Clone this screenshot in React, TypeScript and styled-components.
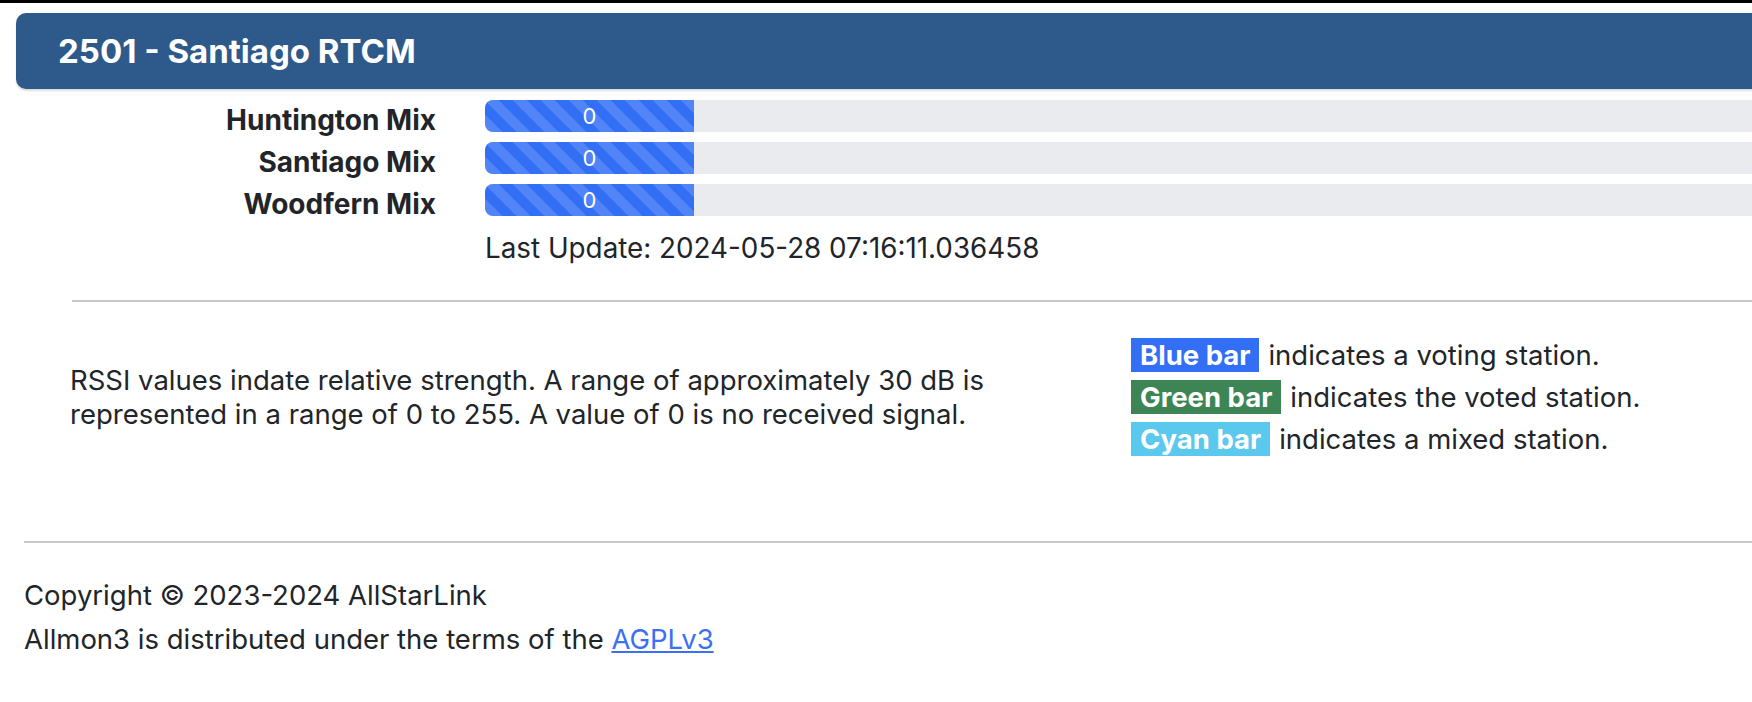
import styled, { createGlobalStyle } from 'styled-components';

const mixes = ['Huntington Mix', 'Santiago Mix', 'Woodfern Mix'];

const legend = [
  { label: 'Blue bar', color: '#336ff5', text: 'indicates a voting station.' },
  { label: 'Green bar', color: '#3e8556', text: 'indicates the voted station.' },
  { label: 'Cyan bar', color: '#5bc8ee', text: 'indicates a mixed station.' },
];

export default function App() {
  return (
    <>
      <GlobalStyle />
      <TopEdge />
      <Page>
        <Header>
          <Title>2501 - Santiago RTCM</Title>
        </Header>

        <MeterGrid>
          {mixes.map((name) => (
            <MeterRow key={name}>
              <MeterLabel>{name}</MeterLabel>
              <Track>
                <Fill style={{ width: 209 }}>0</Fill>
              </Track>
            </MeterRow>
          ))}
          <LastUpdate>Last Update: 2024-05-28 07:16:11.036458</LastUpdate>
        </MeterGrid>

        <Rule $left={72} $top={35} />

        <Info>
          <InfoText>
            RSSI values indate relative strength. A range of approximately 30 dB is
            represented in a range of 0 to 255. A value of 0 is no received signal.
          </InfoText>
          <Legend>
            {legend.map((item) => (
              <LegendRow key={item.label}>
                <Badge $color={item.color}>{item.label}</Badge>
                {item.text}
              </LegendRow>
            ))}
          </Legend>
        </Info>

        <Rule $left={24} $top={0} />

        <Footer>
          <FooterLine>Copyright © 2023-2024 AllStarLink</FooterLine>
          <FooterLine>
            Allmon3 is distributed under the terms of the{' '}
            <FooterLink href="#">AGPLv3</FooterLink>
          </FooterLine>
        </Footer>
      </Page>
    </>
  );
}

const GlobalStyle = createGlobalStyle`
  html, body {
    margin: 0;
    padding: 0;
    background: #fff;
    overflow: hidden;
  }
  body {
    font-family: Inter, "Noto Sans", sans-serif;
    color: #212529;
    font-size: 27.5px;
  }
`;

const TopEdge = styled.div`
  height: 3px;
  background: #000;
`;

const Page = styled.div`
  width: 1800px;
  padding-top: 10px;
`;

const Header = styled.div`
  margin-left: 16px;
  height: 76px;
  display: flex;
  align-items: center;
  padding-left: 42px;
  background: #2d5a8b;
  border-radius: 10px 0 0 10px;
  box-shadow: 0 2px 2px rgba(0, 0, 0, 0.14);
`;

const Title = styled.h2`
  margin: 0;
  color: #fff;
  font-size: 33px;
  font-weight: 700;
`;

const MeterGrid = styled.div`
  margin-top: 11px;
  display: flex;
  flex-direction: column;
  gap: 10px;
`;

const MeterRow = styled.div`
  height: 32px;
  display: grid;
  grid-template-columns: 436px 1fr;
  column-gap: 49px;
  align-items: start;
`;

const MeterLabel = styled.div`
  text-align: right;
  font-size: 28px;
  font-weight: 700;
  line-height: 41px;
  height: 32px;
`;

const Track = styled.div`
  height: 32px;
  background: #e9ebef;
  border-radius: 8px 0 0 8px;
  overflow: hidden;
  display: flex;
`;

const Fill = styled.div`
  height: 100%;
  display: flex;
  align-items: center;
  justify-content: center;
  color: #fff;
  font-size: 22px;
  background-color: #336ff5;
  background-image: linear-gradient(
    45deg,
    rgba(255, 255, 255, 0.15) 25%,
    transparent 25%,
    transparent 50%,
    rgba(255, 255, 255, 0.15) 50%,
    rgba(255, 255, 255, 0.15) 75%,
    transparent 75%,
    transparent
  );
  background-size: 28px 28px;
`;

const LastUpdate = styled.div`
  margin: 5px 0 0 485px;
  font-size: 27.8px;
  line-height: 34px;
`;

const Rule = styled.hr<{ $left: number; $top: number }>`
  margin: ${(p) => p.$top}px 0 0 ${(p) => p.$left}px;
  border: 0;
  border-top: 2px solid #c8c8c8;
`;

const Info = styled.div`
  padding: 36px 0 85px 70px;
  display: flex;
  align-items: center;
`;

const InfoText = styled.p`
  margin: 0;
  width: 1000px;
  line-height: 34.5px;
  flex: none;
`;

const Legend = styled.div`
  margin-left: 61px;
  display: flex;
  flex-direction: column;
  gap: 8px;
`;

const LegendRow = styled.div`
  display: flex;
  align-items: center;
  gap: 9px;
  line-height: 34px;
`;

const Badge = styled.span<{ $color: string }>`
  background: ${(p) => p.$color};
  color: #fff;
  font-weight: 700;
  padding: 0 9px;
  height: 34px;
`;

const Footer = styled.div`
  padding: 35px 0 0 24px;
  display: flex;
  flex-direction: column;
  gap: 10px;
`;

const FooterLine = styled.div`
  line-height: 34px;
`;

const FooterLink = styled.a`
  color: #3c70f3;
  text-decoration: underline;
`;
